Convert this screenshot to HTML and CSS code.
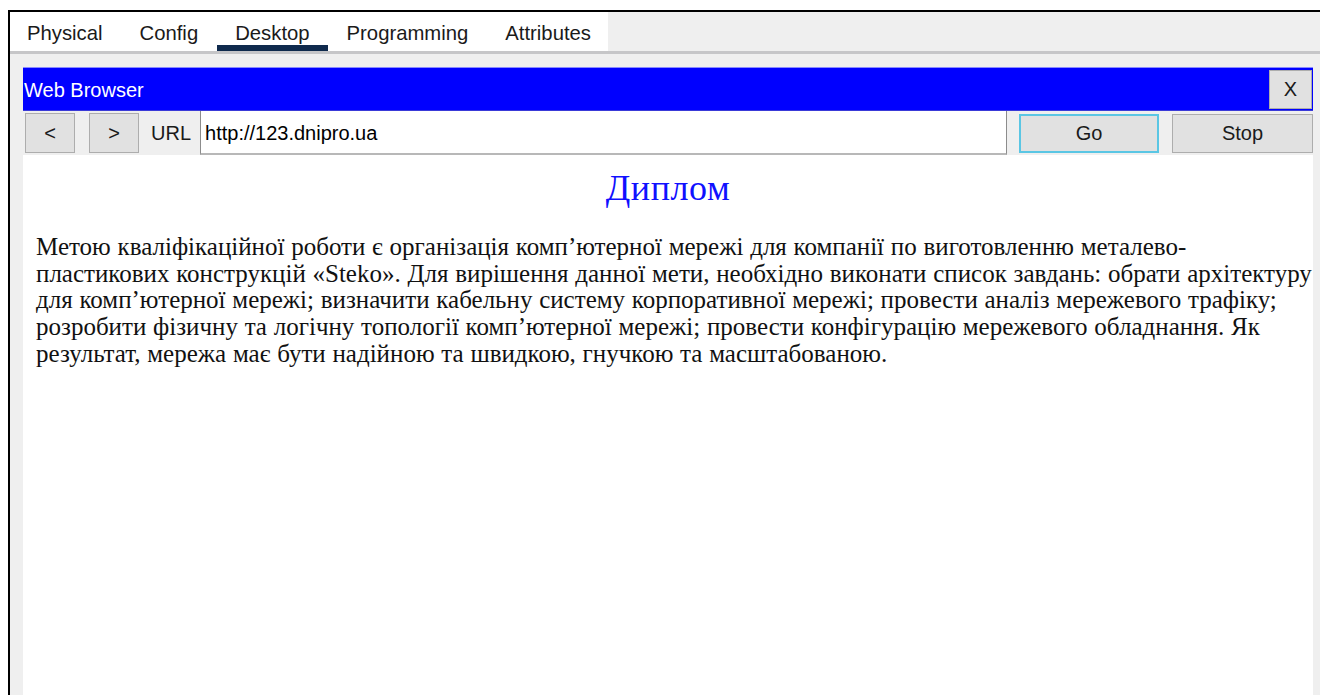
FILE: index.html
```html
<!DOCTYPE html>
<html lang="uk">
<head>
<meta charset="utf-8">
<title>Web Browser</title>
<link rel="stylesheet" href="styles.css">
</head>
<body>
<div class="window">
  <div class="tabbar">
    <div class="tabs">
      <div class="tab tab-first">Physical</div>
      <div class="tab">Config</div>
      <div class="tab tab-active">Desktop</div>
      <div class="tab">Programming</div>
      <div class="tab">Attributes</div>
    </div>
  </div>
  <div class="desktop">
    <div class="browser">
      <div class="titlebar">
        <span class="title">Web Browser</span>
        <button class="close">X</button>
      </div>
      <div class="toolbar">
        <button class="nav">&lt;</button>
        <button class="nav">&gt;</button>
        <span class="url-label">URL</span>
        <div class="url-input">http://123.dnipro.ua</div>
        <button class="action action-go">Go</button>
        <button class="action action-stop">Stop</button>
      </div>
      <div class="page">
        <h1 class="page-title">Диплом</h1>
        <p class="page-text">Метою кваліфікаційної роботи є організація комп’ютерної мережі для компанії по виготовленню металево-пластикових конструкцій «Steko». Для вирішення данної мети, необхідно виконати список завдань: обрати архітектуру для комп’ютерної мережі; визначити кабельну систему корпоративної мережі; провести аналіз мережевого трафіку; розробити фізичну та логічну топології комп’ютерної мережі; провести конфігурацію мережевого обладнання. Як результат, мережа має бути надійною та швидкою, гнучкою та масштабованою.</p>
      </div>
    </div>
  </div>
</div>
</body>
</html>
```

FILE: styles.css
```css
html, body {
  margin: 0;
  padding: 0;
  height: 695px;
  overflow: hidden;
  background: #ffffff;
}

body {
  font-family: "Liberation Sans", Arial, sans-serif;
  font-size: 20px;
  color: #1a1a1a;
}

.window {
  margin: 10px 0 0 8px;
  height: 685px;
  box-sizing: border-box;
  border-top: 2px solid #000;
  border-left: 2px solid #000;
  background: #efefef;
  display: flex;
  flex-direction: column;
}

/* tab strip */
.tabbar {
  height: 39px;
  border-bottom: 3px solid #c6c6c8;
  display: flex;
}

.tabs {
  display: flex;
  background: #ffffff;
  width: 598px;
}

.tab {
  box-sizing: border-box;
  height: 39px;
  padding: 10px 18.5px 0;
  font-size: 20.3px;
  line-height: 23px;
  white-space: nowrap;
}

.tab-first {
  padding-left: 17px;
}

.tab-active {
  border-bottom: 6px solid #0f2a4d;
}

/* desktop area holding the browser */
.desktop {
  flex: 1;
  padding: 13px 7px 0 13px;
  display: flex;
  min-height: 0;
}

.browser {
  flex: 1;
  display: flex;
  flex-direction: column;
}

.titlebar {
  height: 44px;
  box-sizing: border-box;
  background: #0000ff;
  border-top: 1px solid #8a8aff;
  border-bottom: 1px solid #3a3ad8;
  display: flex;
  align-items: center;
  justify-content: space-between;
  padding-right: 1px;
}

.title {
  color: #ffffff;
  padding-left: 1px;
  line-height: 23px;
  margin-top: 2px;
}

button {
  font-family: "Liberation Sans", Arial, sans-serif;
  font-size: 20px;
  color: #1a1a1a;
  background: #e1e1e1;
  border: 1px solid #adadad;
  padding: 0;
  margin: 0;
}

.close {
  width: 43px;
  height: 39px;
}

/* navigation row */
.toolbar {
  height: 44px;
  display: flex;
  align-items: center;
}

.nav {
  width: 50px;
  height: 40px;
  margin-left: 2px;
  margin-right: 12px;
}

.url-label {
  margin-right: 9px;
}

.url-input {
  flex: 1;
  height: 44px;
  box-sizing: border-box;
  background: #ffffff;
  border-left: 1px solid #8c8c8c;
  border-right: 1px solid #8c8c8c;
  border-bottom: 2px solid #b8b8b8;
  padding: 11px 4px 0;
  line-height: 23px;
  color: #000;
}

.action {
  width: 140px;
  height: 39px;
  margin-left: 12px;
}

.action-go {
  border: 2px solid #5ac6e4;
}

.action-stop {
  width: 141px;
  margin-left: 13px;
}

/* page content */
.page {
  flex: 1;
  background: #ffffff;
  padding: 0 13px;
}

.page-title {
  margin: 14px 0 0;
  text-align: center;
  font-family: "Liberation Serif", "Times New Roman", serif;
  font-weight: normal;
  font-size: 36px;
  letter-spacing: 0.6px;
  line-height: 38px;
  color: #1010ff;
}

.page-text {
  margin: 27px -13px 0 0;
  font-family: "Liberation Serif", "Times New Roman", serif;
  font-size: 25px;
  word-spacing: 0.5px;
  line-height: 26.7px;
  color: #111;
}
```
